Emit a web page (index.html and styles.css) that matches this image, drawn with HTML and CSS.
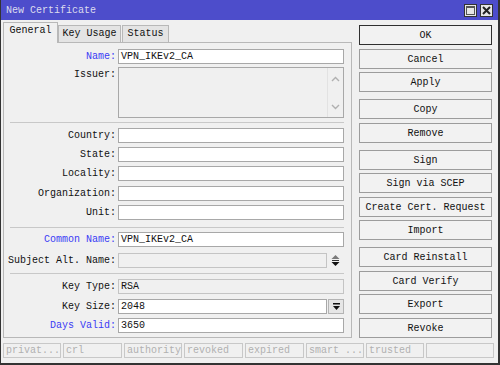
FILE: index.html
```html
<!DOCTYPE html>
<html lang="en">
<head>
    <meta charset="UTF-8">
    <title>New Certificate</title>
    <link rel="stylesheet" href="styles.css">
</head>
<body>
    <div class="window">
        <div class="titlebar">
            <span class="title">New Certificate</span>
            <div class="win-btns">
                <span class="win-btn">
                    <svg width="11" height="11" viewBox="0 0 11 11"><rect x="1.5" y="1.5" width="8" height="8" fill="none" stroke="#555" stroke-width="1"/><rect x="1" y="1" width="9" height="2" fill="#555"/></svg>
                </span>
                <span class="win-btn">
                    <svg width="11" height="11" viewBox="0 0 11 11"><path d="M2 2 L9 9 M9 2 L2 9" stroke="#222" stroke-width="2"/></svg>
                </span>
            </div>
        </div>

        <div class="main">
            <div class="left">
                <div class="tabs">
                    <div class="tab active">General</div>
                    <div class="tab tab-key">Key Usage</div>
                    <div class="tab tab-status">Status</div>
                </div>

                <div class="panel">
                    <div class="row">
                        <label class="key">Name:</label>
                        <div class="field">VPN_IKEv2_CA</div>
                    </div>
                    <div class="row row-issuer">
                        <label>Issuer:</label>
                        <div class="field area">
                            <div class="area-scroll">
                                <svg width="9" height="6" viewBox="0 0 9 6"><path d="M1 5 L4.5 1.5 L8 5" fill="none" stroke="#b0b0b0" stroke-width="1.4"/></svg>
                                <svg width="9" height="6" viewBox="0 0 9 6"><path d="M1 1 L4.5 4.5 L8 1" fill="none" stroke="#b0b0b0" stroke-width="1.4"/></svg>
                            </div>
                        </div>
                    </div>
                    <div class="sep sep-1"></div>
                    <div class="row r-country">
                        <label>Country:</label>
                        <div class="field"></div>
                    </div>
                    <div class="row r-4">
                        <label>State:</label>
                        <div class="field"></div>
                    </div>
                    <div class="row r-4">
                        <label>Locality:</label>
                        <div class="field"></div>
                    </div>
                    <div class="row r-5">
                        <label>Organization:</label>
                        <div class="field"></div>
                    </div>
                    <div class="row r-4">
                        <label>Unit:</label>
                        <div class="field"></div>
                    </div>
                    <div class="sep sep-2"></div>
                    <div class="row r-4">
                        <label class="key">Common Name:</label>
                        <div class="field">VPN_IKEv2_CA</div>
                    </div>
                    <div class="row r-6">
                        <label>Subject Alt. Name:</label>
                        <div class="field-wrap">
                            <div class="field disabled"></div>
                            <span class="spin">
                                <svg width="9" height="13" viewBox="0 0 9 13"><polygon points="0.5,5 4.5,1 8.5,5" fill="#7a7a7a"/><rect x="1" y="6" width="7" height="1" fill="#333"/><polygon points="0.5,8 8.5,8 4.5,12" fill="#111"/></svg>
                            </span>
                        </div>
                    </div>
                    <div class="sep sep-3"></div>
                    <div class="row r-5">
                        <label>Key Type:</label>
                        <div class="field disabled">RSA</div>
                    </div>
                    <div class="row r-5">
                        <label>Key Size:</label>
                        <div class="field-wrap">
                            <div class="field">2048</div>
                            <span class="drop">
                                <svg width="9" height="9" viewBox="0 0 9 9"><rect x="1" y="1" width="7" height="1.5" fill="#111"/><polygon points="1,4 8,4 4.5,8" fill="#111"/></svg>
                            </span>
                        </div>
                    </div>
                    <div class="row r-4">
                        <label class="key">Days Valid:</label>
                        <div class="field">3650</div>
                    </div>
                </div>
            </div>

            <div class="actions">
                <div class="group">
                    <div class="btn btn-default">OK</div>
                    <div class="btn">Cancel</div>
                    <div class="btn">Apply</div>
                </div>
                <div class="group">
                    <div class="btn">Copy</div>
                    <div class="btn">Remove</div>
                </div>
                <div class="group">
                    <div class="btn">Sign</div>
                    <div class="btn">Sign via SCEP</div>
                    <div class="btn">Create Cert. Request</div>
                    <div class="btn">Import</div>
                </div>
                <div class="group">
                    <div class="btn">Card Reinstall</div>
                    <div class="btn">Card Verify</div>
                    <div class="btn">Export</div>
                    <div class="btn">Revoke</div>
                </div>
            </div>
        </div>

        <div class="statusbar">
            <div class="cell">privat...</div>
            <div class="cell">crl</div>
            <div class="cell">authority</div>
            <div class="cell">revoked</div>
            <div class="cell">expired</div>
            <div class="cell">smart ...</div>
            <div class="cell">trusted</div>
            <div class="cell"></div>
        </div>
    </div>
</body>
</html>
```

FILE: styles.css
```css
body {
    margin: 0;
    font-family: "Liberation Mono", "DejaVu Sans Mono", monospace;
    font-size: 10px;
    color: #111;
}
.window {
    width: 500px;
    height: 365px;
    box-sizing: border-box;
    background-color: #f0f0f0;
    border-left: 1px solid #333;
    border-right: 2px solid #333;
    border-bottom: 2px solid #333;
}
.titlebar {
    height: 20px;
    background-color: #4d4dcb;
    display: flex;
    align-items: center;
    justify-content: space-between;
    padding: 0 5px 0 5px;
}
.title {
    color: #dcdcee;
    padding-top: 1px;
}
.win-btns {
    display: flex;
    gap: 3px;
    padding-top: 1px;
}
.win-btn {
    width: 11px;
    height: 11px;
    background-color: #e6e6e6;
    border: 1px solid #333;
    display: flex;
    align-items: center;
    justify-content: center;
}

.main {
    display: flex;
    padding-left: 2px;
}
.left {
    width: 349px;
    padding-top: 2px;
}

/* tabs */
.tabs {
    display: flex;
    align-items: flex-end;
    height: 20px;
}
.tab {
    height: 17px;
    box-sizing: border-box;
    border: 1px solid #b8b8b8;
    border-bottom: none;
    background-color: #e4e4e4;
    text-align: center;
    line-height: 16px;
}
.tab.active {
    width: 55px;
    height: 21px;
    margin-bottom: -1px;
    background-color: #f0f0f0;
    line-height: 16px;
    position: relative;
}
.tab-key {
    width: 63px;
}
.tab-status {
    width: 47px;
    margin-left: 1px;
}

.panel {
    border: 1px solid #b8b8b8;
    padding: 6px 7px 4px 0;
    display: flex;
    flex-direction: column;
}
.row {
    display: grid;
    grid-template-columns: 112px 226px;
    column-gap: 2px;
    height: 15px;
}
.row label {
    text-align: right;
    line-height: 15px;
}
.row label.key {
    color: #3b3bf5;
}
.field {
    height: 15px;
    box-sizing: border-box;
    background-color: #fff;
    border: 1px solid #a8a8a8;
    padding-left: 2px;
    line-height: 13px;
    white-space: nowrap;
}
.field.disabled {
    background-color: #f0f0f0;
    border-color: #c4c4c4;
}
.row-issuer {
    height: 51px;
    margin-top: 3px;
}
.row-issuer label {
    line-height: 13px;
    padding-top: 1px;
}
.field.area {
    height: 51px;
    background-color: #f0f0f0;
    display: flex;
    justify-content: flex-end;
    padding: 0;
}
.area-scroll {
    width: 15px;
    border-left: 1px solid #e2e2e2;
    display: flex;
    flex-direction: column;
    justify-content: space-between;
    align-items: center;
    padding: 8px 0 7px 0;
}
.field-wrap {
    display: flex;
}
.field-wrap .field {
    width: 209px;
}
.spin {
    width: 17px;
    display: flex;
    align-items: center;
    justify-content: center;
}
.drop {
    width: 16px;
    height: 15px;
    box-sizing: border-box;
    margin-left: 1px;
    background-color: #e6e6e6;
    border: 1px solid #b4b4b4;
    display: flex;
    align-items: center;
    justify-content: center;
}

.sep {
    height: 1px;
    background-color: #c8c8c8;
    margin-left: 6px;
}
.sep-1 { margin-top: 4px; }
.sep-2 { margin-top: 7px; }
.sep-3 { margin-top: 5px; }
.r-country { margin-top: 5px; }
.r-4 { margin-top: 4px; }
.r-5 { margin-top: 5px; }
.r-6 { margin-top: 6px; }

/* buttons on the right */
.actions {
    width: 133px;
    margin-left: 7px;
    padding-top: 5px;
    display: flex;
    flex-direction: column;
    gap: 7px;
}
.group {
    display: flex;
    flex-direction: column;
    gap: 3.5px;
}
.btn {
    height: 20px;
    box-sizing: border-box;
    border: 1px solid #9c9c9c;
    background-color: #f2f2f2;
    text-align: center;
    line-height: 19px;
}
.btn-default {
    border-color: #303030;
}

.statusbar {
    display: grid;
    grid-template-columns: 58px 59px 58px 59px 59px 58px 58px 68px;
    column-gap: 2px;
    margin-top: 5px;
    padding-left: 2px;
}
.cell {
    height: 15px;
    box-sizing: border-box;
    border: 1px solid #c8c8c8;
    color: #b0b0b0;
    padding-left: 2px;
    line-height: 13px;
    white-space: nowrap;
    overflow: hidden;
}
```
